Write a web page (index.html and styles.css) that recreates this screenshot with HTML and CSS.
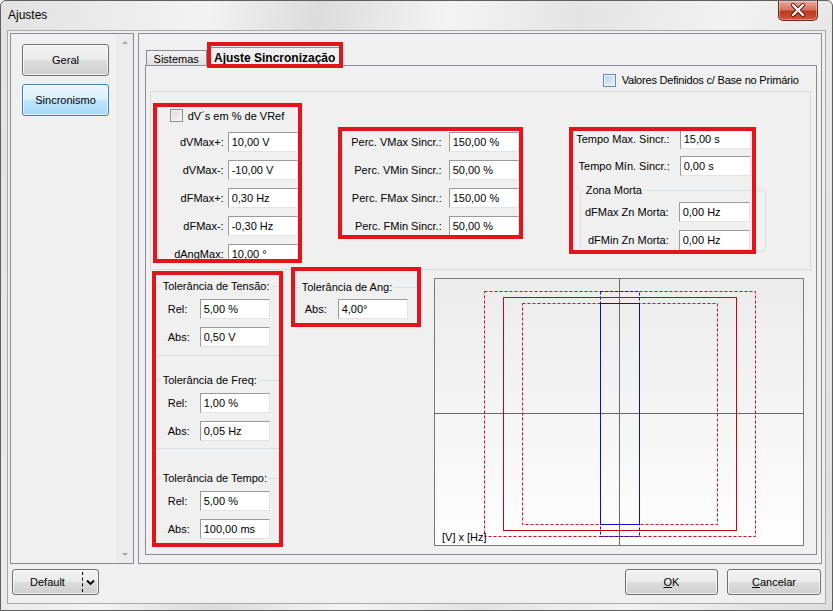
FILE: index.html
```html
<!DOCTYPE html>
<html lang="pt">
<head>
<meta charset="utf-8">
<title>Ajustes</title>
<link rel="stylesheet" href="styles.css">
</head>
<body>
<div class="window">
  <div class="titlebar">
    <span class="title">Ajustes</span>
    <div class="close">
      <svg width="40" height="20" viewBox="0 0 40 20">
        <path d="M15 5 L25 15 M25 5 L15 15" stroke="#5a1a12" stroke-width="4" stroke-linecap="round"/>
        <path d="M15 5 L25 15 M25 5 L15 15" stroke="#ffffff" stroke-width="2.2" stroke-linecap="round"/>
      </svg>
    </div>
  </div>
  <div class="client">
    <div class="main">
      <div class="leftpanel">
        <div class="navlist">
          <div class="btn navbtn">Geral</div>
          <div class="btn navbtn active">Sincronismo</div>
        </div>
        <div class="vscroll">
          <span class="arr up"></span>
          <span class="arr down"></span>
        </div>
      </div>
      <div class="rightpanel">
        <div class="tabstrip">
          <div class="tab">Sistemas</div>
          <div class="tab active">Ajuste Sincronização</div>
        </div>
        <div class="tabpage">
          <div class="primrow">
            <span class="cb blue"></span>
            <span class="primtext">Valores Definidos c/ Base no Primário</span>
          </div>
          <div class="upper">
            <div class="redbox g1">
              <div class="checkrow"><span class="cb"></span><span>dV´s em % de VRef</span></div>
              <div class="rows">
                <div class="row"><span class="lbl">dVMax+:</span><input class="tb" type="text" value="10,00 V" readonly></div>
                <div class="row"><span class="lbl">dVMax-:</span><input class="tb" type="text" value="-10,00 V" readonly></div>
                <div class="row"><span class="lbl">dFMax+:</span><input class="tb" type="text" value="0,30 Hz" readonly></div>
                <div class="row"><span class="lbl">dFMax-:</span><input class="tb" type="text" value="-0,30 Hz" readonly></div>
                <div class="row"><span class="lbl">dAngMax:</span><input class="tb" type="text" value="10,00 °" readonly></div>
              </div>
            </div>
            <div class="redbox g2">
              <div class="row"><span class="lbl">Perc. VMax Sincr.:</span><input class="tb" type="text" value="150,00 %" readonly></div>
              <div class="row"><span class="lbl">Perc. VMin Sincr.:</span><input class="tb" type="text" value="50,00 %" readonly></div>
              <div class="row"><span class="lbl">Perc. FMax Sincr.:</span><input class="tb" type="text" value="150,00 %" readonly></div>
              <div class="row"><span class="lbl">Perc. FMin Sincr.:</span><input class="tb" type="text" value="50,00 %" readonly></div>
            </div>
            <div class="redbox g3">
              <div class="row"><span class="lbl">Tempo Max. Sincr.:</span><input class="tb" type="text" value="15,00 s" readonly></div>
              <div class="row"><span class="lbl">Tempo Mín. Sincr.:</span><input class="tb" type="text" value="0,00 s" readonly></div>
              <div class="zgroup">
                <span class="gtitle">Zona Morta</span>
                <div class="row"><span class="lbl">dFMax Zn Morta:</span><input class="tb" type="text" value="0,00 Hz" readonly></div>
                <div class="row"><span class="lbl">dFMin Zn Morta:</span><input class="tb" type="text" value="0,00 Hz" readonly></div>
              </div>
            </div>
          </div>
          <div class="lower">
            <div class="redbox g4">
              <div class="tgroup t1">
                <span class="gtitle">Tolerância de Tensão:</span>
                <div class="row"><span class="lbl">Rel:</span><input class="tb" type="text" value="5,00 %" readonly></div>
                <div class="row"><span class="lbl">Abs:</span><input class="tb" type="text" value="0,50 V" readonly></div>
              </div>
              <div class="tgroup t2">
                <span class="gtitle">Tolerância de Freq:</span>
                <div class="row"><span class="lbl">Rel:</span><input class="tb" type="text" value="1,00 %" readonly></div>
                <div class="row"><span class="lbl">Abs:</span><input class="tb" type="text" value="0,05 Hz" readonly></div>
              </div>
              <div class="tgroup t3">
                <span class="gtitle">Tolerância de Tempo:</span>
                <div class="row"><span class="lbl">Rel:</span><input class="tb" type="text" value="5,00 %" readonly></div>
                <div class="row"><span class="lbl">Abs:</span><input class="tb" type="text" value="100,00 ms" readonly></div>
              </div>
            </div>
            <div class="redbox g5">
              <div class="tgroup ta">
                <span class="gtitle">Tolerância de Ang:</span>
                <div class="row"><span class="lbl">Abs:</span><input class="tb" type="text" value="4,00°" readonly></div>
              </div>
            </div>
            <div class="chart">
              <svg width="370" height="268" viewBox="0 0 370 268">
                <defs>
                  <linearGradient id="cbg" x1="0" y1="0" x2="0" y2="1">
                    <stop offset="0" stop-color="#ececec"/>
                    <stop offset="1" stop-color="#fefefe"/>
                  </linearGradient>
                </defs>
                <rect x="0.5" y="0.5" width="369" height="267" fill="url(#cbg)" stroke="#7a7a7a"/>
                <line x1="185.5" y1="0" x2="185.5" y2="268" stroke="#6a6a6a"/>
                <line x1="0" y1="135.5" x2="370" y2="135.5" stroke="#6a6a6a"/>
                <rect x="50.5" y="13.5" width="271" height="245" fill="none" stroke="#c8101e" stroke-dasharray="3 2"/>
                <rect x="69.5" y="19.5" width="233" height="233" fill="none" stroke="#c00818"/>
                <rect x="88.5" y="25.5" width="195" height="221" fill="none" stroke="#c8101e" stroke-dasharray="3 2"/>
                <rect x="166.5" y="13.5" width="39" height="245" fill="none" stroke="#1010c0" stroke-dasharray="3 2"/>
                <rect x="166.5" y="25.5" width="39" height="221" fill="none" stroke="#1010c0"/>
                <text x="8" y="263" class="axislbl">[V] x [Hz]</text>
              </svg>
            </div>
          </div>
        </div>
      </div>
    </div>
    <div class="footer">
      <div class="btn split"><span class="splittext">Default</span><span class="splitarrow">
        <svg width="9" height="7" viewBox="0 0 9 7"><path d="M1 1.5 L4.5 5 L8 1.5" fill="none" stroke="#000" stroke-width="1.8"/></svg>
      </span></div>
      <div class="spacer"></div>
      <div class="btn dlg"><u>O</u>K</div>
      <div class="btn dlg"><u>C</u>ancelar</div>
    </div>
  </div>
</div>
</body>
</html>
```
FILE: styles.css
```css
* { box-sizing: border-box; }
html, body { margin: 0; padding: 0; }
body {
  width: 833px;
  height: 611px;
  overflow: hidden;
  font-family: "Liberation Sans", Arial, sans-serif;
  font-size: 11px;
  color: #000;
  background: #ffffff;
}

.window {
  width: 833px;
  height: 611px;
  border: 1px solid #5f5f5f;
  border-radius: 6px 6px 0 0;
  background: linear-gradient(100deg, #e2e2e2 0%, #f3f3f3 22%, #dcdcdc 34%, #f4f4f4 48%, #e4e4e4 62%, #f2f2f2 78%, #dedede 100%);
  display: flex;
  flex-direction: column;
}

.titlebar {
  height: 29px;
  display: flex;
  align-items: flex-start;
  padding-left: 7px;
  flex: none;
}
.title {
  font-size: 12px;
  line-height: 14px;
  margin-top: 7px;
}
.close {
  margin-left: auto;
  margin-right: 14px;
  width: 40px;
  height: 20px;
  border: 1px solid #6b2a1f;
  border-top: none;
  border-radius: 0 0 5px 5px;
  background: linear-gradient(#e9a99a 0%, #d7735f 45%, #c1391f 55%, #d2553a 100%);
  box-shadow: inset 0 0 0 1px rgba(255,255,255,0.35);
}
.close svg { display: block; margin: -1px 0 0 -1px; }

.client {
  margin: 0 6px;
  height: 574px;
  border: 1px solid #a8a8a8;
  background: #f0f0f0;
  padding: 2px 3px 0 2px;
}

.main {
  display: flex;
  gap: 4px;
  height: 531px;
}

.leftpanel {
  width: 124px;
  border: 1px solid #898c95;
  display: flex;
  background: #f0f0f0;
}
.navlist {
  flex: 1;
  padding: 10px 0 0 11px;
  display: flex;
  flex-direction: column;
  gap: 8px;
}
.btn {
  border: 1px solid #707070;
  border-radius: 3px;
  background: linear-gradient(#f2f2f2 0%, #ebebeb 50%, #dddddd 51%, #cfcfcf 100%);
  box-shadow: inset 0 0 0 1px rgba(255,255,255,0.7);
  display: flex;
  align-items: center;
  justify-content: center;
}
.navbtn {
  width: 87px;
  height: 32px;
}
.navbtn.active {
  border-color: #3c7fb1;
  background: linear-gradient(#eaf6fd 0%, #d9f0fc 50%, #bee6fd 51%, #a7d9f5 100%);
}
.vscroll {
  width: 16px;
  flex: none;
  border-left: 1px solid #e6e6e6;
  background: #ececec;
  display: flex;
  flex-direction: column;
  justify-content: space-between;
  align-items: center;
  padding: 7px 0 7px;
}
.arr {
  width: 0;
  height: 0;
  border-left: 3px solid transparent;
  border-right: 3px solid transparent;
}
.arr.up { border-bottom: 3px solid #a8a8a8; }
.arr.down { border-top: 3px solid #a8a8a8; }

.rightpanel {
  width: 686px;
  border: 1px solid #898c95;
  padding: 13px 0 0 6px;
}
.tabstrip {
  display: flex;
  align-items: flex-end;
  height: 18px;
  padding-left: 1px;
}
.tab {
  height: 15px;
  width: 61px;
  border: 1px solid #898c95;
  border-bottom: none;
  background: linear-gradient(#f2f2f2, #e1e1e1);
  display: flex;
  align-items: center;
  justify-content: center;
  padding-top: 1px;
}
.tab.active {
  position: relative;
  z-index: 2;
  width: 136px;
  height: 19px;
  margin-bottom: -1px;
  background: #f0f0f0;
  font-weight: bold;
  font-size: 12px;
}
.tab.active::after {
  content: "";
  position: absolute;
  left: -1px;
  right: -1px;
  top: -6px;
  bottom: -2px;
  border: 4px solid #e5141c;
}

.tabpage {
  width: 672px;
  height: 490px;
  border: 1px solid #898c95;
  background: #f0f0f0;
}

.primrow {
  display: flex;
  justify-content: flex-end;
  align-items: center;
  gap: 6px;
  height: 14px;
  margin-top: 7px;
  padding-right: 17px;
}
.primtext { letter-spacing: -0.2px; }
.cb {
  width: 13px;
  height: 13px;
  border: 1px solid #8f8f8f;
  background: linear-gradient(135deg, #d8d8d8, #f7f7f7);
  box-shadow: inset 0 0 0 1px #f4f4f4;
  flex: none;
}
.cb.blue {
  border-color: #5e8bbf;
  background: linear-gradient(135deg, #b9d4ee, #e8f2fb);
  box-shadow: inset 0 0 0 1px #eef5fc;
}

.upper {
  margin: 4px 0 0 4px;
  width: 661px;
  height: 179px;
  border: 1px solid #dadada;
  display: flex;
  align-items: flex-start;
}

.redbox { position: relative; flex: none; }
.redbox::after {
  content: "";
  position: absolute;
  inset: 0;
  border: 4px solid #e5141c;
  pointer-events: none;
}

.row {
  display: flex;
  align-items: center;
  height: 20px;
  flex: none;
}
.lbl { flex: none; white-space: nowrap; }
.tb {
  width: 70px;
  height: 20px;
  margin: 0;
  padding: 0 3px;
  font-family: inherit;
  font-size: 11px;
  color: #000;
  background: #fff;
  border-top: 1px solid #9a9a9a;
  border-left: 1px solid #9a9a9a;
  border-right: 1px solid #e3e3e3;
  border-bottom: 1px solid #e3e3e3;
  border-radius: 0;
  outline: none;
  flex: none;
}

/* group 1 */
.g1 {
  margin: 11px 0 0 2px;
  width: 149px;
  height: 160px;
  padding-top: 6px;
  overflow: hidden;
}
.checkrow {
  display: flex;
  align-items: center;
  gap: 5px;
  height: 13px;
  padding-left: 17px;
}
.g1 .rows {
  margin-top: 10px;
  display: flex;
  flex-direction: column;
  gap: 8px;
}
.g1 .lbl { width: 71px; text-align: right; margin-right: 4px; }

/* group 2 */
.g2 {
  margin: 35px 0 0 36px;
  width: 185px;
  height: 112px;
  padding-top: 5px;
  display: flex;
  flex-direction: column;
  gap: 8px;
  overflow: hidden;
}
.g2 .lbl { width: 104px; text-align: right; margin-right: 7px; }

/* group 3 */
.g3 {
  margin: 35px 0 0 46px;
  width: 187px;
  height: 127px;
  padding-top: 2px;
  display: flex;
  flex-direction: column;
  gap: 7px;
}
.g3 > .row .lbl { width: 101px; text-align: right; margin-right: 10px; }
.g3 .tb { width: 71px; }
.zgroup {
  flex: none;
  margin: 7px 0 0 11px;
  width: 186px;
  height: 62px;
  border: 1px solid #d5dfe5;
  border-radius: 3px;
  display: flex;
  flex-direction: column;
}
.gtitle {
  align-self: flex-start;
  flex: none;
  height: 13px;
  line-height: 13px;
  margin-top: -7px;
  padding: 0 2px;
  background: #f0f0f0;
  white-space: nowrap;
}
.zgroup .gtitle { margin-left: 3px; }
.zgroup .row:first-of-type { margin-top: 5px; }
.zgroup .row + .row { margin-top: 8px; }
.zgroup .lbl { width: 88px; text-align: right; margin-right: 10px; }

/* lower area */
.lower {
  display: flex;
  align-items: flex-start;
  margin-left: 6px;
}
.g4 {
  margin-top: 1px;
  width: 131px;
  height: 276px;
  overflow: hidden;
  display: flex;
  flex-direction: column;
}
.tgroup {
  flex: none;
  border: 1px solid #d5dfe5;
  border-radius: 3px;
  display: flex;
  flex-direction: column;
  padding-left: 15px;
}
.tgroup .gtitle { margin-left: -7px; }
.tgroup .row:first-of-type { margin-top: 6px; }
.tgroup .row + .row { margin-top: 8px; }
.tgroup .lbl { width: 32px; }
.t1 { margin-top: 15px; height: 70px; }
.t2 { margin-top: 24px; height: 69px; }
.t3 { margin-top: 29px; height: 80px; }

.g5 {
  margin: -3px 0 0 8px;
  width: 130px;
  height: 60px;
  overflow: hidden;
}
.ta {
  margin-top: 20px;
  height: 60px;
  padding-left: 13px;
}
.ta .gtitle { margin-left: -5px; }
.ta .row:first-of-type { margin-top: 5px; }
.ta .lbl { width: 33px; }

.chart {
  flex: none;
  margin: 8px 0 0 13px;
  width: 370px;
  height: 268px;
}
.chart svg { display: block; }
.axislbl {
  font-family: "Liberation Sans", Arial, sans-serif;
  font-size: 11px;
  fill: #000;
}

/* footer */
.footer {
  display: flex;
  align-items: center;
  margin-top: 5px;
  height: 26px;
  padding: 0 1px 0 1px;
}
.spacer { flex: 1; }
.split {
  margin-left: 1px;
  width: 87px;
  height: 26px;
  justify-content: flex-start;
}
.splittext {
  width: 70px;
  text-align: center;
  border-right: 1px dashed #000;
  height: 20px;
  line-height: 20px;
}
.splitarrow {
  width: 15px;
  display: flex;
  justify-content: center;
}
.splitarrow svg { display: block; }
.dlg {
  width: 93px;
  height: 26px;
  margin-left: 9px;
}
.dlg:last-child { width: 94px; }
```
